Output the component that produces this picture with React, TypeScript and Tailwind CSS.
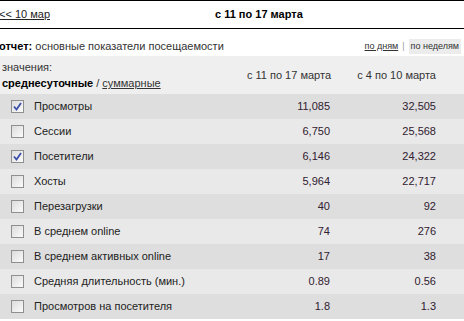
const rows = [
  { name: "Просмотры", a: "11,085", b: "32,505", checked: true },
  { name: "Сессии", a: "6,750", b: "25,568", checked: false },
  { name: "Посетители", a: "6,146", b: "24,322", checked: true },
  { name: "Хосты", a: "5,964", b: "22,717", checked: false },
  { name: "Перезагрузки", a: "40", b: "92", checked: false },
  { name: "В среднем online", a: "74", b: "276", checked: false },
  { name: "В среднем активных online", a: "17", b: "38", checked: false },
  { name: "Средняя длительность (мин.)", a: "0.89", b: "0.56", checked: false },
  { name: "Просмотров на посетителя", a: "1.8", b: "1.3", checked: false },
];

function CheckBox({ checked }: { checked: boolean }) {
  return (
    <span className="w-[13px] h-[13px] border border-[#8e8f8f] bg-gradient-to-br from-[#dcdcdc] to-[#fbfbfb] flex items-center justify-center">
      {checked && (
        <svg width="9" height="9" viewBox="0 0 9 9">
          <path d="M1 4.5 L3.5 7.5 L8 1" fill="none" stroke="#3c4fa8" strokeWidth="1.8" />
        </svg>
      )}
    </span>
  );
}

export default function App() {
  return (
    <div className="w-[464px] h-[321px] overflow-hidden bg-white text-[11px] text-[#333] font-['Liberation_Sans',Arial,sans-serif]">
      {/* Navigation bar */}
      <div className="h-[29px] border-t border-b border-black flex items-center relative">
        <a className="text-[11px] text-[#222] underline ml-[-1px]">&lt;&lt; 10 мар</a>
        <span className="absolute left-[215px] font-bold text-[11px] text-black">с 11 по 17 марта</span>
      </div>

      {/* Report line */}
      <div className="h-[27px] flex items-center justify-between pt-[8px]">
        <span className="text-[11px] text-[#333] ml-[-1px]">
          <b className="text-black">отчет:</b> основные показатели посещаемости
        </span>
        <span className="flex items-center text-[9px] mr-[3px]">
          <a className="underline text-[#333]">по дням</a>
          <span className="mx-[4px] text-[#999]">|</span>
          <span className="bg-[#ececec] px-[2px] py-[1px] text-[#333]">по неделям</span>
        </span>
      </div>

      {/* Header */}
      <div className="h-[38px] bg-[#efefef] flex items-center">
        <div className="w-[232px] pl-[2px] text-[11px] leading-[16px]">
          <div className="text-[#333]">значения:</div>
          <div>
            <b className="text-black">среднесуточные</b> / <span className="underline">суммарные</span>
          </div>
        </div>
        <div className="w-[99px] text-right text-[11px]">с 11 по 17 марта</div>
        <div className="w-[105px] text-right text-[11px]">с 4 по 10 марта</div>
      </div>

      {/* Rows */}
      {rows.map((r, i) => (
        <div
          key={r.name}
          className={`h-[25px] flex items-center ${i % 2 === 0 ? "bg-[#dedede]" : "bg-[#e9e9e9]"}`}
        >
          <div className="w-[232px] flex items-center pl-[11px]">
            <CheckBox checked={r.checked} />
            <span className="ml-[10px] text-[#222]">{r.name}</span>
          </div>
          <div className="w-[98px] text-right text-[#302030]">{r.a}</div>
          <div className="w-[106px] text-right text-[#302030]">{r.b}</div>
        </div>
      ))}
    </div>
  );
}
